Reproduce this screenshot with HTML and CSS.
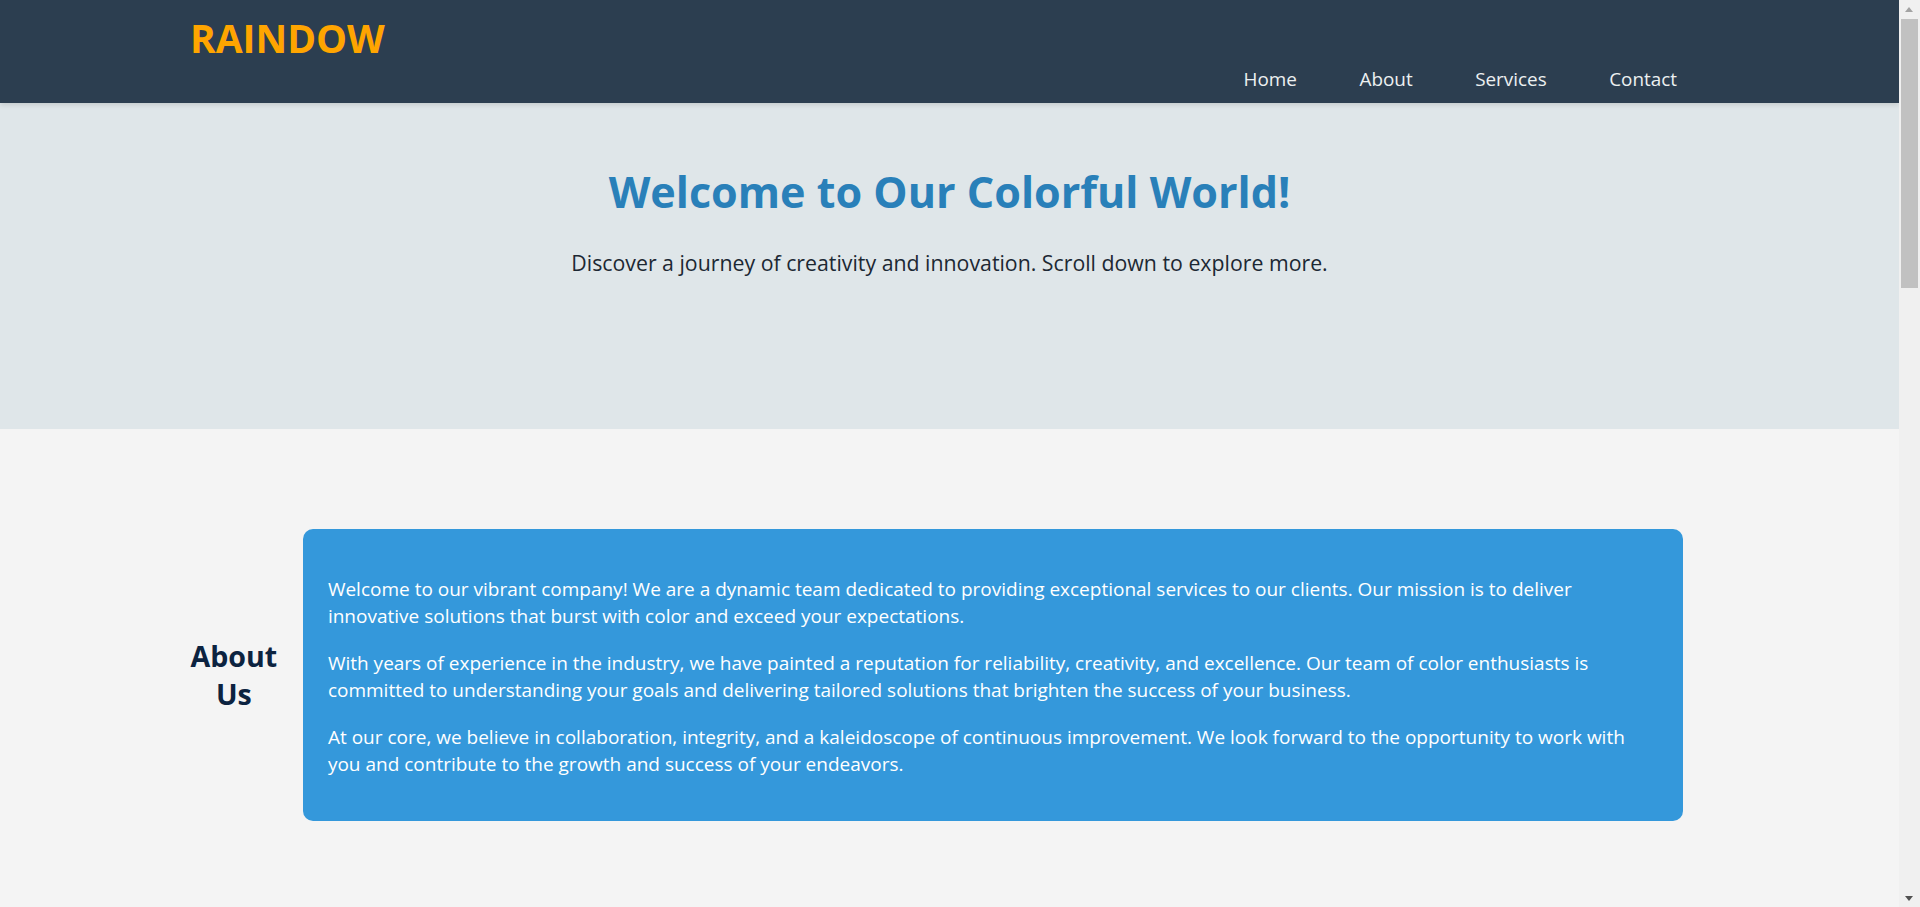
FILE: index.html
```html
<!DOCTYPE html>
<html lang="en">
<head>
<meta charset="utf-8">
<title>Raindow</title>
<link rel="stylesheet" href="styles.css">
</head>
<body>
<header class="site-header">
  <div class="container header-inner">
    <h1 class="logo">RAINDOW</h1>
    <nav class="main-nav">
      <ul class="nav-list">
        <li><a href="#home">Home</a></li>
        <li><a href="#about">About</a></li>
        <li><a href="#services">Services</a></li>
        <li><a href="#contact">Contact</a></li>
      </ul>
    </nav>
  </div>
</header>
<section class="hero" id="home">
  <h2 class="hero-title">Welcome to Our Colorful World!</h2>
  <p class="hero-text">Discover a journey of creativity and innovation. Scroll down to explore more.</p>
</section>
<section class="about" id="about">
  <div class="container about-row">
    <h2 class="about-title">About Us</h2>
    <div class="about-box">
      <p>Welcome to our vibrant company! We are a dynamic team dedicated to providing exceptional services to our clients. Our mission is to deliver innovative solutions that burst with color and exceed your expectations.</p>
      <p>With years of experience in the industry, we have painted a reputation for reliability, creativity, and excellence. Our team of color enthusiasts is committed to understanding your goals and delivering tailored solutions that brighten the success of your business.</p>
      <p>At our core, we believe in collaboration, integrity, and a kaleidoscope of continuous improvement. We look forward to the opportunity to work with you and contribute to the growth and success of your endeavors.</p>
    </div>
  </div>
</section>
<div class="scrollbar" aria-hidden="true">
  <span class="scroll-arrow scroll-up"></span>
  <span class="scroll-thumb"></span>
  <span class="scroll-arrow scroll-down"></span>
</div>
</body>
</html>
```

FILE: styles.css
```css
* { box-sizing: border-box; }

html, body {
  margin: 0;
  padding: 0;
}

body {
  font-family: "Open Sans", "Noto Sans", sans-serif;
  background: #f4f4f4;
  color: #2c3e50;
  padding-right: 21px;
}

.container {
  width: 80%;
  margin: 0 auto;
}

/* Header */
.site-header {
  background: #2c3e50;
  box-shadow: 0 2px 5px rgba(0, 0, 0, 0.12);
  position: relative;
  z-index: 2;
}

.header-inner {
  height: 103px;
  padding: 14px 0 12px;
  display: flex;
  justify-content: space-between;
}

.logo {
  margin: 0;
  font-size: 39px;
  line-height: 48px;
  font-weight: 700;
  color: #ffa500;
  align-self: flex-start;
}

.main-nav {
  align-self: flex-end;
}

.nav-list {
  list-style: none;
  margin: 0 32px 0 0;
  padding: 0;
  display: flex;
  gap: 62.5px;
}

.nav-list a {
  color: #ecf0f1;
  text-decoration: none;
  font-size: 18.9px;
  line-height: 24px;
  display: block;
}

/* Hero */
.hero {
  background: #dfe6e9;
  height: 326px;
  padding: 61px 20px 0;
  text-align: center;
}

.hero-title {
  margin: 0 0 28px;
  font-size: 43.1px;
  line-height: 56px;
  font-weight: 700;
  color: #2980b9;
}

.hero-text {
  margin: 0;
  font-size: 21.3px;
  line-height: 30px;
  color: #1c2833;
}

/* About */
.about {
  padding: 100px 0;
}

.about-row {
  display: flex;
  align-items: center;
}

.about-title {
  flex: 0 0 88px;
  width: 88px;
  margin: 0 25px 0 0;
  font-size: 28.6px;
  line-height: 38px;
  font-weight: 700;
  text-align: center;
  color: #0c2340;
}

.about-box {
  flex: 1;
  margin-right: 26px;
  background: #3498db;
  color: #ffffff;
  border-radius: 10px;
  padding: 27px 35px 23px 25px;
}

.about-box p {
  margin: 20px 0;
  font-size: 19px;
  line-height: 27px;
}

/* Window scrollbar, as it appears in the screenshot */
.scrollbar {
  position: fixed;
  top: 0;
  right: 0;
  width: 21px;
  height: 100vh;
  background: #f0f0f0;
  z-index: 10;
}

.scroll-thumb {
  position: absolute;
  top: 19px;
  left: 2px;
  width: 17px;
  height: 269px;
  background: #c1c1c1;
}

.scroll-arrow {
  position: absolute;
  left: 6px;
  width: 0;
  height: 0;
  border-left: 4.5px solid transparent;
  border-right: 4.5px solid transparent;
}

.scroll-up {
  top: 7px;
  border-bottom: 5px solid #a3a3a3;
}

.scroll-down {
  bottom: 6px;
  border-top: 5px solid #505050;
}
```
